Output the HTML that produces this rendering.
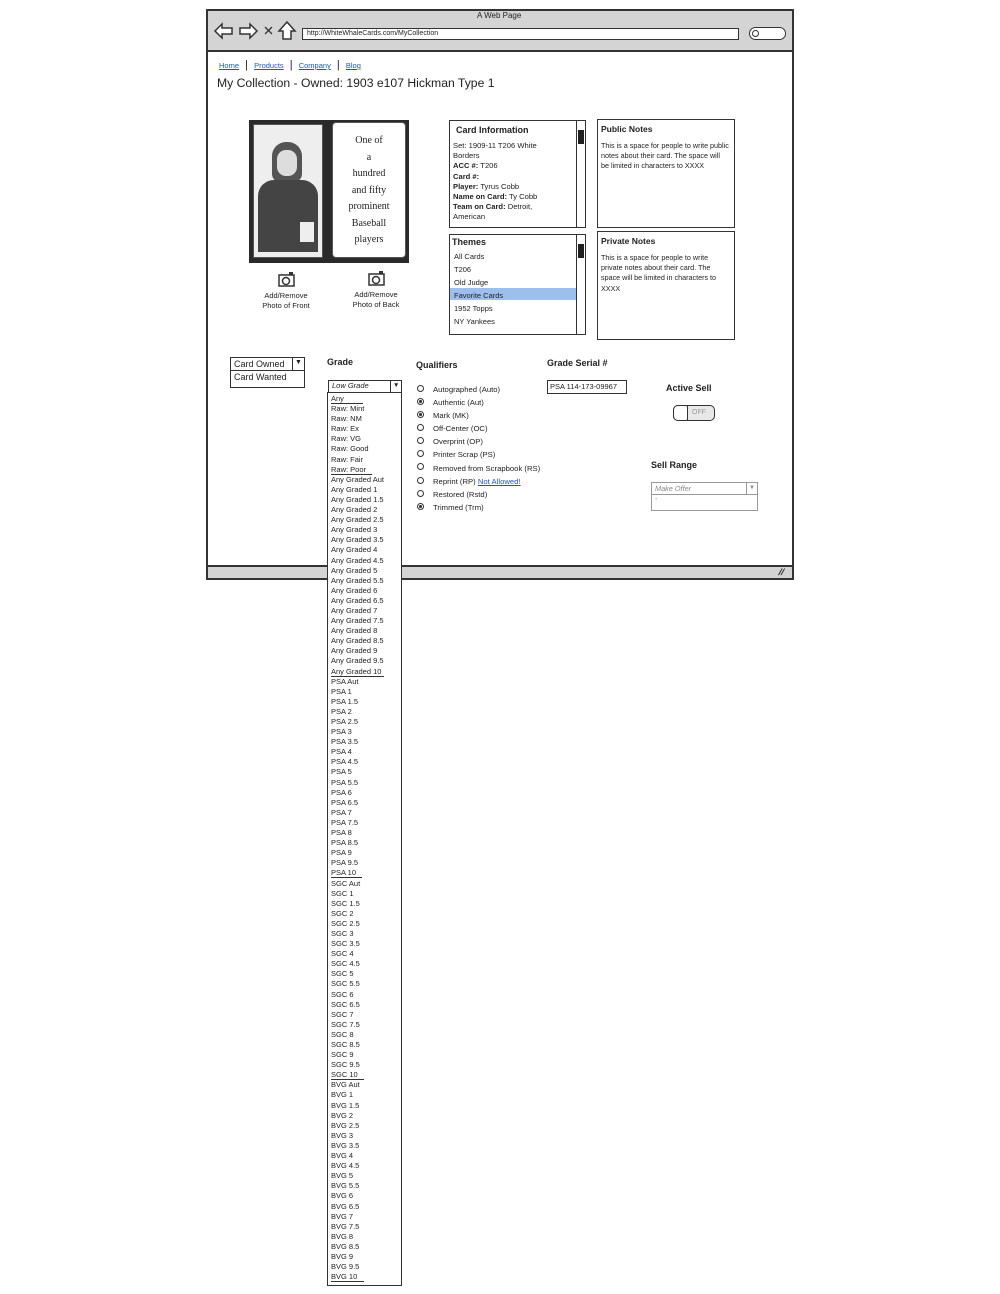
<!DOCTYPE html>
<html><head><meta charset="utf-8">
<style>
*{margin:0;padding:0;box-sizing:border-box}
body{width:1000px;height:1294px;background:#fff;position:relative;font-family:"Liberation Sans",sans-serif;color:#222;overflow:hidden}
.a{position:absolute}
.t{font-size:7.5px;line-height:10.2px}
.b{font-weight:bold}
.box{position:absolute;border:1.5px solid #333;background:#fff}
.sb{position:absolute;right:0;top:0;bottom:0;width:9px;border-left:1px solid #333;background:#fff}
.sb i{position:absolute;left:1px;width:6px;background:#222}
.lnk{color:#2255bb;text-decoration:underline}
.radio{position:absolute;width:7px;height:7px;border:1.3px solid #333;border-radius:50%}
.radio.on::after{content:"";position:absolute;left:1px;top:1px;width:2.5px;height:2.5px;background:#333;border-radius:50%}
.list div{height:10.1px;line-height:10.1px;font-size:7.5px;padding-left:3px;white-space:nowrap}
.list div.u span{border-bottom:1px solid #333}
</style></head><body>

<div class="a" style="left:206px;top:9px;width:588px;height:571px;border:2px solid #333;background:#fff"></div>
<div class="a" style="left:208px;top:11px;width:584px;height:41px;background:#d4d4d4;border-bottom:2px solid #333"></div>
<div class="a" style="left:208px;top:565px;width:584px;height:13px;background:#d4d4d4;border-top:2px solid #333"></div>
<div class="a t" style="left:477px;top:11px;font-size:8px">A Web Page</div>
<svg class="a" style="left:212px;top:20px" width="90" height="22">
<path d="M3 11 L10 4 L10 8 L20 8 L20 14 L10 14 L10 18 Z" fill="#fff" stroke="#333" stroke-width="1.5"/>
<path d="M45 11 L38 4 L38 8 L28 8 L28 14 L38 14 L38 18 Z" fill="#fff" stroke="#333" stroke-width="1.5"/>
<path d="M53 7 L60 14 M60 7 L53 14" stroke="#333" stroke-width="1.3"/>
<path d="M75 2 L67 11 L71 11 L71 19 L79 19 L79 11 L83 11 Z" fill="#fff" stroke="#333" stroke-width="1.5"/>
</svg>
<div class="a" style="left:302px;top:28px;width:437px;height:12px;border:1.5px solid #333;background:#fff;font-size:7px;line-height:9px;padding-left:4px">http://WhiteWhaleCards.com/MyCollection</div>
<div class="a" style="left:749px;top:27px;width:37px;height:13px;border:1.5px solid #333;border-radius:7px;background:#fff"></div>
<div class="a" style="left:752px;top:30px;width:7px;height:7px;border:1.2px solid #333;border-radius:50%"></div>

<div class="a" style="left:219px;top:59px;font-size:7.5px">
<span class="lnk">Home</span> <span style="margin:0 4px;font-size:11px">|</span> <span class="lnk">Products</span> <span style="margin:0 4px;font-size:11px">|</span> <span class="lnk">Company</span> <span style="margin:0 4px;font-size:11px">|</span> <span class="lnk">Blog</span></div>
<div class="a" style="left:217px;top:76px;font-size:12.2px">My Collection - Owned: 1903 e107 Hickman Type 1</div>

<div class="a" style="left:249px;top:120px;width:160px;height:143px;background:#2a2a2a"></div>
<div class="a" style="left:253px;top:124px;width:70px;height:134px;background:#eee;border:1px solid #555"></div>
<div class="a" style="left:272px;top:142px;width:30px;height:40px;background:#555;border-radius:14px 14px 8px 8px"></div>
<div class="a" style="left:277px;top:150px;width:20px;height:26px;background:#ddd;border-radius:9px"></div>
<div class="a" style="left:258px;top:180px;width:60px;height:72px;background:#444;border-radius:16px 16px 0 0"></div>
<div class="a" style="left:300px;top:222px;width:14px;height:20px;background:#eee"></div>
<div class="a" style="left:332px;top:122px;width:74px;height:136px;background:#fff;border:1px solid #555;border-radius:4px;font-family:'Liberation Serif',serif;font-size:10px;text-align:center;line-height:16.5px;padding-top:10px;color:#222">One of<br>a<br>hundred<br>and fifty<br>prominent<br>Baseball<br>players</div>

<svg class="a" style="left:278px;top:272px" width="18" height="15"><rect x="1" y="3" width="15" height="11" fill="#fff" stroke="#333" stroke-width="1.5"/><rect x="11" y="0" width="4" height="3" fill="#333"/><circle cx="8" cy="9" r="3.5" fill="#fff" stroke="#333" stroke-width="1.5"/></svg>
<svg class="a" style="left:368px;top:271px" width="18" height="15"><rect x="1" y="3" width="15" height="11" fill="#fff" stroke="#333" stroke-width="1.5"/><rect x="11" y="0" width="4" height="3" fill="#333"/><circle cx="8" cy="9" r="3.5" fill="#fff" stroke="#333" stroke-width="1.5"/></svg>
<div class="a t" style="left:256px;top:291px;width:60px;text-align:center;font-size:7.5px;line-height:9.5px">Add/Remove<br>Photo of Front</div>
<div class="a t" style="left:346px;top:290px;width:60px;text-align:center;font-size:7.5px;line-height:9.5px">Add/Remove<br>Photo of Back</div>

<div class="box" style="left:449px;top:120px;width:137px;height:108px">
<div class="sb"><i style="top:9px;height:14px"></i></div>
<div class="a b" style="left:6px;top:4px;font-size:9px">Card Information</div>
<div class="a t" style="left:3px;top:20px;width:100px;font-size:7.6px">Set: 1909-11 T206 White Borders<br><b>ACC #:</b> T206<br><b>Card #:</b><br><b>Player:</b> Tyrus Cobb<br><b>Name on Card:</b> Ty Cobb<br><b>Team on Card:</b> Detroit, American</div>
</div>
<div class="box" style="left:449px;top:234px;width:137px;height:101px">
<div class="sb"><i style="top:9px;height:14px"></i></div>
<div class="a b" style="left:2px;top:2px;font-size:9px">Themes</div>
<div class="a" style="left:0;top:53px;width:126px;height:12px;background:#9dbfee"></div>
<div class="a t" style="left:4px;top:15px;font-size:7.5px;line-height:13px">All Cards<br>T206<br>Old Judge<br>Favorite Cards<br>1952 Topps<br>NY Yankees</div>
</div>
<div class="box" style="left:597px;top:119px;width:138px;height:109px">
<div class="a b" style="left:3px;top:4px;font-size:8.5px">Public Notes</div>
<div class="a t" style="left:3px;top:21px;width:128px;font-size:7.2px">This is a space for people to write public notes about their card. The space will be limited in characters to XXXX</div>
</div>
<div class="box" style="left:597px;top:231px;width:138px;height:109px">
<div class="a b" style="left:3px;top:4px;font-size:8.5px">Private Notes</div>
<div class="a t" style="left:3px;top:21px;width:128px;font-size:7.2px">This is a space for people to write private notes about their card. The space will be limited in characters to XXXX</div>
</div>

<div class="box" style="left:230px;top:357px;width:75px;height:31px;font-size:9px;line-height:13px;padding-left:3px">Card Owned<br>Card Wanted</div>
<div class="a" style="left:230px;top:370px;width:75px;height:1px;background:#333"></div>
<div class="a" style="left:292px;top:357px;width:1px;height:14px;background:#333"></div>
<div class="a" style="left:295px;top:359px;font-size:7px">▼</div>

<div class="a b" style="left:327px;top:357px;font-size:9px">Grade</div>
<div class="box" style="left:328px;top:380px;width:74px;height:13px;font-size:7.5px;font-style:italic;line-height:10px;padding-left:3px">Low Grade</div>
<div class="a" style="left:390px;top:380px;width:1px;height:13px;background:#333"></div>
<div class="a" style="left:393px;top:382px;font-size:6.5px">▼</div>
<div class="box list" style="left:327px;top:392px;width:75px;height:894px;border-width:1.3px;padding-top:1px">
<div class="u"><span>Any&nbsp;&nbsp;&nbsp;&nbsp;&nbsp;&nbsp;&nbsp;&nbsp;&nbsp;</span></div>
<div>Raw: Mint</div><div>Raw: NM</div><div>Raw: Ex</div><div>Raw: VG</div><div>Raw: Good</div><div>Raw: Fair</div>
<div class="u"><span>Raw: Poor&nbsp;&nbsp;&nbsp;</span></div>
<div>Any Graded Aut</div><div>Any Graded 1</div><div>Any Graded 1.5</div><div>Any Graded 2</div><div>Any Graded 2.5</div><div>Any Graded 3</div><div>Any Graded 3.5</div><div>Any Graded 4</div><div>Any Graded 4.5</div><div>Any Graded 5</div><div>Any Graded 5.5</div><div>Any Graded 6</div><div>Any Graded 6.5</div><div>Any Graded 7</div><div>Any Graded 7.5</div><div>Any Graded 8</div><div>Any Graded 8.5</div><div>Any Graded 9</div><div>Any Graded 9.5</div>
<div class="u"><span>Any Graded 10&nbsp;</span></div>
<div>PSA Aut</div><div>PSA 1</div><div>PSA 1.5</div><div>PSA 2</div><div>PSA 2.5</div><div>PSA 3</div><div>PSA 3.5</div><div>PSA 4</div><div>PSA 4.5</div><div>PSA 5</div><div>PSA 5.5</div><div>PSA 6</div><div>PSA 6.5</div><div>PSA 7</div><div>PSA 7.5</div><div>PSA 8</div><div>PSA 8.5</div><div>PSA 9</div><div>PSA 9.5</div>
<div class="u"><span>PSA 10&nbsp;&nbsp;&nbsp;</span></div>
<div>SGC Aut</div><div>SGC 1</div><div>SGC 1.5</div><div>SGC 2</div><div>SGC 2.5</div><div>SGC 3</div><div>SGC 3.5</div><div>SGC 4</div><div>SGC 4.5</div><div>SGC 5</div><div>SGC 5.5</div><div>SGC 6</div><div>SGC 6.5</div><div>SGC 7</div><div>SGC 7.5</div><div>SGC 8</div><div>SGC 8.5</div><div>SGC 9</div><div>SGC 9.5</div>
<div class="u"><span>SGC 10&nbsp;&nbsp;&nbsp;</span></div>
<div>BVG Aut</div><div>BVG 1</div><div>BVG 1.5</div><div>BVG 2</div><div>BVG 2.5</div><div>BVG 3</div><div>BVG 3.5</div><div>BVG 4</div><div>BVG 4.5</div><div>BVG 5</div><div>BVG 5.5</div><div>BVG 6</div><div>BVG 6.5</div><div>BVG 7</div><div>BVG 7.5</div><div>BVG 8</div><div>BVG 8.5</div><div>BVG 9</div><div>BVG 9.5</div>
<div class="u"><span>BVG 10&nbsp;&nbsp;&nbsp;</span></div>
</div>

<div class="a b" style="left:416px;top:360px;font-size:9px">Qualifiers</div>
<div class="radio" style="left:417px;top:385px"></div>
<div class="radio on" style="left:417px;top:398px"></div>
<div class="radio on" style="left:417px;top:411px"></div>
<div class="radio" style="left:417px;top:424px"></div>
<div class="radio" style="left:417px;top:437px"></div>
<div class="radio" style="left:417px;top:450px"></div>
<div class="radio" style="left:417px;top:463px"></div>
<div class="radio" style="left:417px;top:477px"></div>
<div class="radio" style="left:417px;top:490px"></div>
<div class="radio on" style="left:417px;top:503px"></div>
<div class="a" style="left:433px;top:383px;font-size:7.7px;line-height:13.1px">Autographed (Auto)<br>Authentic (Aut)<br>Mark (MK)<br>Off-Center (OC)<br>Overprint (OP)<br>Printer Scrap (PS)<br>Removed from Scrapbook (RS)<br>Reprint (RP) <span class="lnk">Not Allowed!</span><br>Restored (Rstd)<br>Trimmed (Trm)</div>

<div class="a b" style="left:547px;top:358px;font-size:9px">Grade Serial #</div>
<div class="box" style="left:547px;top:380px;width:80px;height:14px;font-size:7.5px;line-height:11px;padding-left:2px">PSA 114-173-09967</div>

<div class="a b" style="left:666px;top:383px;font-size:9px">Active Sell</div>
<div class="a" style="left:673px;top:405px;width:42px;height:16px;border:1.5px solid #333;border-radius:5px;background:#e8e8e8"></div>
<div class="a" style="left:673px;top:405px;width:15px;height:16px;border:1.5px solid #333;border-radius:5px 2px 2px 5px;background:#fff"></div>
<div class="a" style="left:692px;top:409px;font-size:7px;color:#999">OFF</div>

<div class="a b" style="left:651px;top:460px;font-size:9px">Sell Range</div>
<div class="a" style="left:651px;top:482px;width:107px;height:29px;border:1px solid #999;background:#fff"></div>
<div class="a" style="left:651px;top:494px;width:107px;height:1px;background:#999"></div>
<div class="a" style="left:746px;top:482px;width:1px;height:12px;background:#999"></div>
<div class="a" style="left:655px;top:484px;font-size:7.3px;font-style:italic;color:#888">Make Offer</div>
<div class="a" style="left:749px;top:485px;font-size:6px;color:#888">▼</div>
<div class="a" style="left:655px;top:496px;font-size:7px;color:#888">-</div>

<div class="a" style="left:779px;top:567px;font-size:9px;font-weight:bold;transform:skewX(-20deg)">//</div>
</body></html>
